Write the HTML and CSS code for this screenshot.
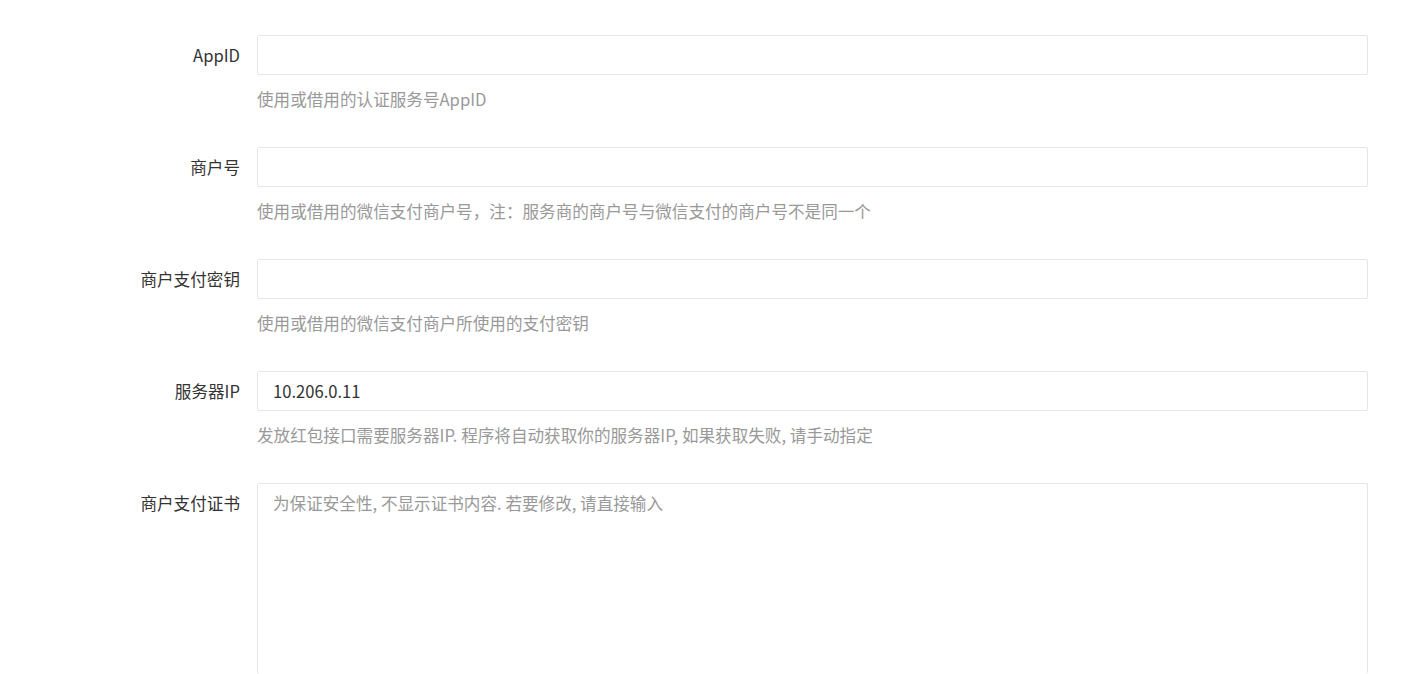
FILE: index.html
```html
<!DOCTYPE html>
<html lang="zh-CN">
<head>
<meta charset="utf-8">
<title>支付设置</title>
<link rel="stylesheet" href="styles.css">
</head>
<body>
<form class="form">
  <div class="row">
    <label class="label">AppID</label>
    <div class="field">
      <input class="input" type="text" value="">
      <div class="help">使用或借用的认证服务号AppID</div>
    </div>
  </div>
  <div class="row">
    <label class="label">商户号</label>
    <div class="field">
      <input class="input" type="text" value="">
      <div class="help">使用或借用的微信支付商户号，注：服务商的商户号与微信支付的商户号不是同一个</div>
    </div>
  </div>
  <div class="row">
    <label class="label">商户支付密钥</label>
    <div class="field">
      <input class="input" type="text" value="">
      <div class="help">使用或借用的微信支付商户所使用的支付密钥</div>
    </div>
  </div>
  <div class="row">
    <label class="label">服务器IP</label>
    <div class="field">
      <input class="input" type="text" value="10.206.0.11">
      <div class="help">发放红包接口需要服务器IP. 程序将自动获取你的服务器IP, 如果获取失败, 请手动指定</div>
    </div>
  </div>
  <div class="row row-last">
    <label class="label">商户支付证书</label>
    <div class="field">
      <textarea class="textarea" placeholder="为保证安全性, 不显示证书内容. 若要修改, 请直接输入"></textarea>
    </div>
  </div>
</form>
</body>
</html>
```
FILE: styles.css
```css
html, body {
  margin: 0;
  padding: 0;
  background: #fff;
  height: 674px;
  overflow: hidden;
}
body {
  font-family: "Noto Sans CJK SC", "Noto Sans", sans-serif;
  font-size: 16.6px;
  color: #333;
}
.form {
  padding: 35px 60px 0 0;
  display: flex;
  flex-direction: column;
  gap: 36px;
}
.row {
  display: flex;
  align-items: flex-start;
}
.label {
  flex: 0 0 240px;
  box-sizing: border-box;
  text-align: right;
  line-height: 40px;
  height: 40px;
  margin-right: 17px;
  color: #333;
}
.field {
  flex: 1 1 auto;
  display: flex;
  flex-direction: column;
}
.input, .textarea {
  box-sizing: border-box;
  display: block;
  width: 100%;
  margin: 0;
  border: 1px solid #e6e6e6;
  border-radius: 2px;
  background: #fff;
  font: inherit;
  color: #333;
  padding: 0 15px;
  outline: none;
}
.input {
  height: 40px;
  line-height: 38px;
}
.textarea {
  height: 191px;
  border-bottom: 0;
  padding-top: 5px;
  line-height: 28px;
  resize: none;
}
.textarea::placeholder {
  color: #999;
}
.help {
  margin-top: 12px;
  height: 24px;
  line-height: 24px;
  color: #999;
  white-space: nowrap;
}
```
